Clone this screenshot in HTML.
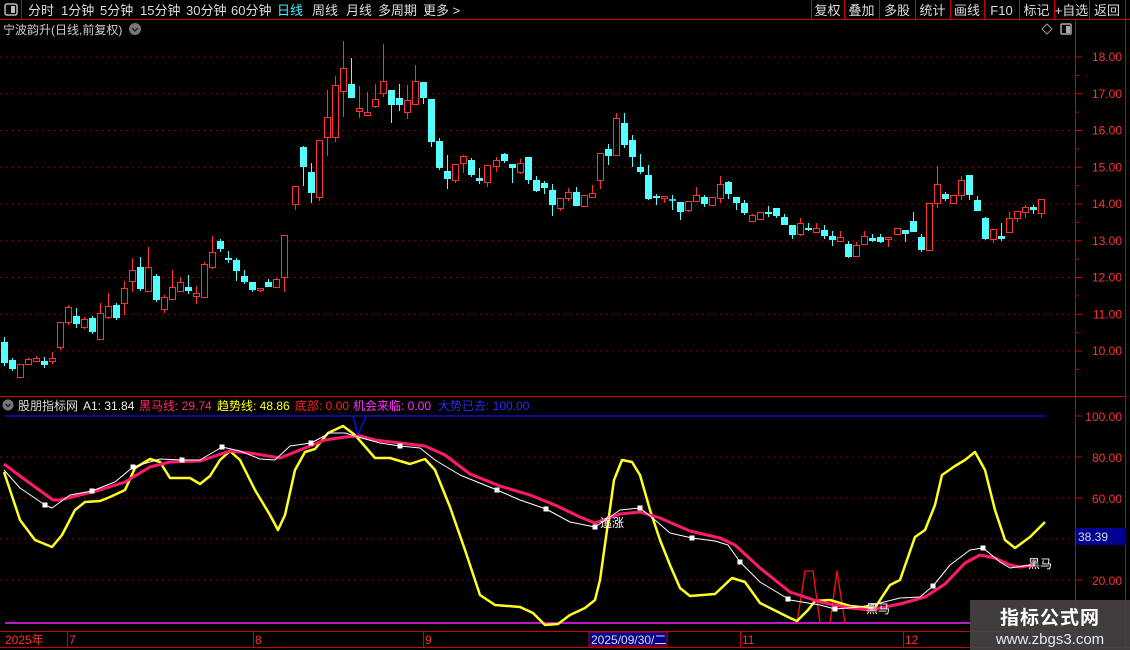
<!DOCTYPE html>
<html><head><meta charset="utf-8"><style>
body{margin:0;background:#000;width:1130px;height:650px;overflow:hidden;font-family:"Liberation Sans","Noto Sans CJK SC",sans-serif;}
svg{position:absolute;left:0;top:0}
.t{font-family:"Liberation Sans","Noto Sans CJK SC",sans-serif;}
#wm{position:absolute;left:970px;top:600px;width:160px;height:50px;background:rgba(70,66,66,0.93);color:#fff;text-align:center;}
#wm .a{font-size:19px;font-weight:bold;margin-top:3px;letter-spacing:1px}
#wm .b{font-size:15px;color:#dfe8ff;margin-top:1px}
</style></head><body>
<svg id="s" width="1130" height="650" xmlns="http://www.w3.org/2000/svg"></svg>
<div id="wm"><div class="a">指标公式网</div><div class="b">www.zbgs3.com</div></div>
<script>
var S=document.getElementById('s'),h='';
function L(x1,y1,x2,y2,c,w,d){h+='<line x1="'+x1+'" y1="'+y1+'" x2="'+x2+'" y2="'+y2+'" stroke="'+c+'" stroke-width="'+(w||1)+'"'+(d?' stroke-dasharray="'+d+'"':'')+'/>';}
function T(x,y,s,c,fs,a){h+='<text class="t" x="'+x+'" y="'+y+'" fill="'+c+'" font-size="'+(fs||12)+'"'+(a?' text-anchor="'+a+'"':'')+'>'+s+'</text>';}
function P(pts,c,w){h+='<polyline fill="none" stroke="'+c+'" stroke-width="'+w+'" stroke-linejoin="round" points="'+pts.map(function(p){return p.join(',')}).join(' ')+'"/>';}
var R='#d00000';
L(0,19.5,1130,19.5,R);L(21.5,0,21.5,19,R);
h+='<rect x="5" y="4" width="12" height="11" rx="2" fill="none" stroke="#bbb" stroke-width="1.5"/><rect x="11" y="6" width="4" height="7" fill="#bbb"/>';
var tb=[['分时',28],['1分钟',61],['5分钟',100],['15分钟',140],['30分钟',186],['60分钟',231],['日线',277],['周线',312],['月线',346],['多周期',378],['更多 >',423]];
tb.forEach(function(b){T(b[1],15,b[0],b[0]=='日线'?'#40f0ff':'#ddd',13)});
var sep=[811,844,879,915,950,984,1019,1054,1089,1125],bt=['复权','叠加','多股','统计','画线','F10','标记','+自选','返回'];
sep.forEach(function(x){L(x+.5,0,x+.5,19,R)});
bt.forEach(function(b,i){T((sep[i]+sep[i+1])/2,15,b,'#ddd',13,'middle')});
T(3,34,'宁波韵升(日线,前复权)','#ccc',12);
h+='<circle cx="135" cy="29" r="6" fill="#777"/><path d="M132 28l3 3 3-3" stroke="#222" stroke-width="1.5" fill="none"/>';
h+='<path d="M1047 24l5 5-5 5-5-5z" fill="none" stroke="#999"/><rect x="1061" y="24" width="10" height="10" rx="1" fill="none" stroke="#aaa" stroke-width="1.5"/><rect x="1066" y="26" width="4" height="7" fill="#aaa"/>';
L(1075.5,20,1075.5,648,R);L(1125.5,20,1125.5,648,R);L(0,396.5,1075,396.5,R);L(1075,396.5,1125,396.5,R);
for(var p=18;p>=10;p--){var y=57+(18-p)*36.75;L(0,y,1075,y,'#8a0000',1,'2,4');L(1076,y,1082,y,R);L(1076,y+18.4,1079,y+18.4,R);T(1122,y+4,p+'.00','#ff3030',12,'end');}
var C=[['c',342,363,337,366],['c',360,369,358,371],['r',364,377,364,377],['r',359,364,358,365],['r',358,361,356,362],['c',361,365,357,368],['r',358,361,352,364],['r',322,347,322,350],['r',307,322,305,325],['c',316,324,308,328],['r',319,327,317,329],['c',318,332,316,334],['r',313,339,303,339],['r',306,317,293,319],['c',305,318,303,320],['r',288,303,281,315],['r',270,281,258,292],['c',267,289,257,291],['r',267,291,247,291],['c',276,300,274,302],['r',297,309,295,313],['r',287,299,270,299],['r',282,291,277,291],['c',287,291,275,294],['r',293,296,286,304],['r',264,297,262,297],['r',252,267,236,269],['c',241,249,239,252],['c',258,260,251,263],['c',260,271,258,281],['c',276,282,270,284],['c',282,290,282,292],['r',288,290,288,292],['c',282,287,279,287],['r',279,287,278,287],['r',235,277,235,292],
['r',186,204,186,210],['c',147,167,146,186],['c',172,193,163,203],['r',140,197,140,201],['r',117,137,90,156],['r',85,137,76,142],['r',68,91,41,117],['c',84,98,58,98],['r',108,111,86,118],['r',112,115,92,115],['r',99,106,84,108],['r',81,93,44,97],['c',90,105,90,123],['c',98,105,84,111],['r',100,112,85,119],['r',81,104,65,104],['c',82,98,82,104],['c',99,142,99,147],['c',141,168,138,170],['c',171,179,155,189],['r',164,180,164,183],['r',156,163,155,173],['c',160,175,158,177],['c',178,181,168,184],['r',165,182,165,187],['r',160,166,157,172],['c',154,161,153,163],['c',164,168,164,183],['r',163,172,159,174],['c',157,180,157,184],['c',180,191,176,192],['c',183,188,181,194],['c',190,205,184,216],['r',198,208,198,211],['r',192,198,188,201],['c',192,206,187,206],['r',195,206,195,206],['r',193,197,185,197],['r',153,180,153,189],['c',149,156,144,165],['r',118,155,113,155],['c',123,145,113,148],['c',140,157,135,167],['c',167,172,154,174],['c',175,199,165,200],['c',196,198,194,205],['r',196,198,196,203],['c',200,200,195,210],['c',202,212,202,220],['r',201,210,201,212],['r',195,201,187,201],['c',197,204,195,207],['r',197,205,197,206],['r',184,198,176,203],['c',182,194,181,199],['c',197,203,197,210],['c',203,213,200,215],['r',215,221,214,222],['r',212,219,212,219],['c',212,214,206,217],['c',208,216,208,218],['c',217,225,214,225],['c',225,235,225,239],['r',223,234,218,236],['c',228,230,223,231],['r',228,232,223,232],['c',230,236,225,239],['c',236,240,231,246],['r',237,241,231,241],['c',244,257,241,258],['r',245,256,242,256],['r',236,244,231,244],['c',238,241,234,242],['c',237,242,234,243],['r',237,239,237,247],['r',228,234,228,234],['c',230,234,230,242],['c',221,232,212,232],['c',237,250,234,252],['r',203,250,203,250],['r',184,203,166,208],['c',194,199,192,201],['r',195,203,195,203],['r',180,195,176,200],['c',175,195,175,200],['c',200,211,196,211],['c',218,239,217,240],['r',229,239,229,243],['c',236,239,223,241],['r',218,232,212,232],['r',211,218,211,222],['r',207,212,205,218],['c',207,210,205,214],['r',199,213,199,218]];
C.forEach(function(c,i){var x=4+i*8;if(i>=36)x=295+(i-36)*8.02;x=Math.round(x)+.5;var col=c[0]=='r'?'#ff3232':'#54ffff';
L(x,c[3],x,c[1],col);L(x,c[2],x,c[4],col);
if(c[0]=='r'){h+='<rect x="'+(x-3)+'" y="'+(c[1]+.5)+'" width="6" height="'+Math.max(c[2]-c[1],1)+'" fill="#000" stroke="'+col+'"/>';}
else{if(c[2]-c[1]<2)L(x-3.5,c[1],x+3.5,c[1],col,1.5);else h+='<rect x="'+(x-3.5)+'" y="'+c[1]+'" width="7" height="'+(c[2]-c[1])+'" fill="'+col+'"/>';}});
h+='<circle cx="8" cy="405" r="5.5" fill="#777"/><path d="M5.5 404l2.5 2.5 2.5-2.5" stroke="#222" stroke-width="1.5" fill="none"/>';
T(18,410,'股朋指标网','#ddd',12);T(83,410,'A1: 31.84','#eee',12);T(139,410,'黑马线: 29.74','#ff2d6e',12);T(217,410,'趋势线: 48.86','#ffff20',12);T(295,410,'底部: 0.00','#ff2020',12);T(353,410,'机会来临: 0.00','#ff30ff',12);T(438,410,'大势已去: 100.00','#2a2aff',12);
[100,80,60,40,20].forEach(function(v){var y=621-v*2.05;if(v<100&&v>=20)L(0,y,1075,y,'#8a0000',1,'2,4');L(1076,y,1082,y,R);T(1122,y+5,v+'.00','#ff3030',12,'end');});
L(5,416,1045,416,'#1010ff',1.3);P([[353,416],[358,435],[366,416]],'#1010ff',1.3);
L(5,623,970,623,'#ff20ff',1.5);
P([[797,623],[805,571],[813,571],[820,623]],'#ff1010',1.3);P([[830,623],[837,571],[845,623]],'#ff1010',1.3);
P([[4,472],[20,520],[35,540],[52,547],[62,535],[75,510],[85,502],[100,501],[110,497],[125,490],[135,468],[150,459],[160,462],[170,478],[190,478],[200,484],[210,476],[220,460],[230,451],[240,460],[255,490],[270,515],[278,530],[285,515],[295,470],[305,452],[315,449],[328,433],[343,426],[355,435],[375,458],[390,458],[410,464],[425,459],[435,470],[450,507],[465,550],[480,595],[495,605],[520,607],[533,613],[545,625],[558,624],[570,615],[585,608],[595,600],[600,580],[607,530],[614,480],[622,460],[632,462],[640,475],[650,510],[660,540],[670,565],[680,588],[690,596],[715,594],[732,578],[745,582],[760,603],[790,618],[797,621],[808,610],[815,601],[830,600],[850,606],[860,607],[875,608],[882,597],[890,585],[900,580],[915,537],[925,530],[935,505],[942,475],[955,466],[965,460],[975,452],[985,470],[995,510],[1005,540],[1015,548],[1030,537],[1045,522]],'#ffff20',2.5);
P([[4,464],[20,476],[53,500],[60,500],[100,490],[125,482],[150,467],[170,462],[200,461],[230,451],[250,453],[280,458],[300,450],[325,440],[345,437],[360,436],[375,440],[400,443],[425,446],[445,455],[470,474],[500,486],[530,495],[555,505],[580,517],[595,523],[620,514],[640,512],[660,518],[690,531],[720,538],[735,545],[760,568],[790,592],[820,602],[850,608],[870,610],[900,604],[925,597],[945,584],[965,563],[980,555],[995,558],[1010,565],[1020,567],[1035,565]],'#ff1a6a',3);
var W=[[4,470],[20,488],[45,505],[52,508],[70,495],[92,491],[115,482],[133,467],[160,459],[182,460],[200,460],[222,447],[240,451],[260,459],[275,460],[290,446],[311,443],[330,433],[345,433],[358,437],[380,443],[400,446],[420,448],[435,460],[460,475],[497,490],[520,500],[546,509],[570,522],[595,527],[607,519],[620,510],[640,508],[655,520],[670,533],[692,538],[715,541],[728,545],[740,562],[760,582],[790,600],[820,605],[835,609],[860,607],[880,603],[900,598],[920,597],[933,586],[950,565],[970,550],[983,548],[1000,562],[1010,568],[1030,565]];
P(W,'#ffffff',1);
[[45,505],[92,491],[133,467],[182,460],[222,447],[311,443],[400,446],[497,490],[546,509],[595,527],[640,508],[692,538],[740,562],[788,599],[835,609],[933,586],[983,548]].forEach(function(p){h+='<rect x="'+(p[0]-2.5)+'" y="'+(p[1]-2.5)+'" width="5" height="5" fill="#fff"/>';});
T(600,527,'追涨','#fff',12);T(866,613,'黑马','#fff',12);T(1028,568,'黑马','#fff',12);
h+='<rect x="1076" y="528" width="50" height="17" fill="#000090"/>';T(1078,541,'38.39','#ddd',12);
L(0,631.5,1075,631.5,R);L(0,647.5,1130,647.5,R);
[67,253,423,740,903].forEach(function(x){L(x+.5,631,x+.5,647,R)});
T(5,644,'2025年','#ff3030',12);T(69,644,'7','#ff3030',12);T(255,644,'8','#ff3030',12);T(425,644,'9','#ff3030',12);T(742,644,'11','#ff3030',12);T(905,644,'12','#ff3030',12);
h+='<rect x="589" y="632" width="78" height="14" fill="#000090" stroke="'+R+'"/>';T(591,644,'2025/09/30/二','#ddd',12);
S.innerHTML=h;
</script>
</body></html>
